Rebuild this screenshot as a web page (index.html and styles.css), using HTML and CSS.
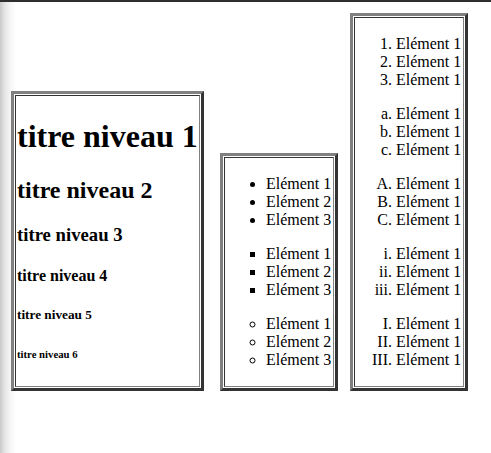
FILE: index.html
```html
<!DOCTYPE html>
<html lang="fr">
<head>
<meta charset="utf-8">
<title>Listes et titres</title>
<link rel="stylesheet" href="styles.css">
</head>
<body>
<div class="row">
  <div class="box box-titles">
    <div class="cell">
      <h1>titre niveau 1</h1>
      <h2>titre niveau 2</h2>
      <h3>titre niveau 3</h3>
      <h4>titre niveau 4</h4>
      <h5>titre niveau 5</h5>
      <h6>titre niveau 6</h6>
    </div>
  </div>
  <div class="box box-ul">
    <div class="cell">
      <ul class="list disc"><li>Elément 1</li><li>Elément 2</li><li>Elément 3</li></ul>
      <ul class="list square"><li>Elément 1</li><li>Elément 2</li><li>Elément 3</li></ul>
      <ul class="list circle"><li>Elément 1</li><li>Elément 2</li><li>Elément 3</li></ul>
    </div>
  </div>
  <div class="box box-ol">
    <div class="cell">
      <ol class="list decimal"><li>Elément 1</li><li>Elément 1</li><li>Elément 1</li></ol>
      <ol class="list lower-alpha"><li>Elément 1</li><li>Elément 1</li><li>Elément 1</li></ol>
      <ol class="list upper-alpha"><li>Elément 1</li><li>Elément 1</li><li>Elément 1</li></ol>
      <ol class="list lower-roman"><li>Elément 1</li><li>Elément 1</li><li>Elément 1</li></ol>
      <ol class="list upper-roman"><li>Elément 1</li><li>Elément 1</li><li>Elément 1</li></ol>
    </div>
  </div>
</div>
</body>
</html>
```

FILE: styles.css
```css
html {
  border-top: 2px solid #2e2e2e;
  background: linear-gradient(to right, #c9c9c9 0, #e6e6e6 5px, #f7f7f7 11px, #ffffff 16px);
}

body {
  margin: 8px;
  font-family: "Liberation Serif", "Times New Roman", serif;
  color: #000;
}

.row {
  display: flex;
  align-items: flex-end;
  padding: 3px;
}

.box {
  box-sizing: border-box;
  flex: none;
  border: 3px solid;
  border-color: #808080 #333333 #333333 #808080;
  padding: 1px;
}

.box-titles {
  width: 193px;
}

.box-ul {
  width: 118px;
  margin-left: 16px;
}

.box-ol {
  width: 118px;
  margin-left: 12px;
}

.cell {
  border: 1px solid;
  border-color: #333333 #808080 #808080 #333333;
  padding: 1px;
}

.box-titles .cell {
  white-space: nowrap;
}

.list {
  margin: 16px 0;
  padding-left: 40px;
  line-height: 18px;
  white-space: nowrap;
}

.disc { list-style-type: disc; }
.square { list-style-type: square; }
.circle { list-style-type: circle; }
.decimal { list-style-type: decimal; }
.lower-alpha { list-style-type: lower-alpha; }
.upper-alpha { list-style-type: upper-alpha; }
.lower-roman { list-style-type: lower-roman; }
.upper-roman { list-style-type: upper-roman; }
```
